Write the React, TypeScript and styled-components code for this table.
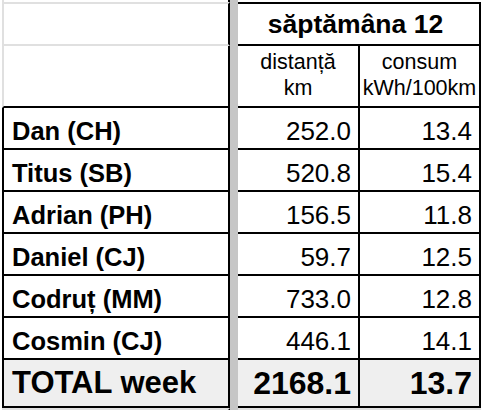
import React from "react";
import styled, { createGlobalStyle } from "styled-components";

const BLACK = "#000000";
const GRID = "#e0e0e0";
const BAND = "#c6c6c6";
const TOTAL_BG = "#efefef";

const Global = createGlobalStyle`
  html, body { margin: 0; padding: 0; background: #ffffff; }
  body { font-family: "Liberation Sans", Arial, sans-serif; color: #000; }
  * { box-sizing: border-box; }
`;

const Sheet = styled.div`
  display: grid;
  grid-template-columns: 228px 8px 122px 121px;
  grid-template-rows: 2px 44px 62px repeat(6, 42px) 48px 2px;
  padding-left: 2px;
  width: 482px;
  height: 410px;
  overflow: hidden;
`;

const FrozenBar = styled.div`
  grid-column: 2;
  grid-row: 1 / -1;
  background: ${BAND};
`;

const Spacer = styled.div`
  grid-column: 3 / span 2;
`;

type LabelKind = "top" | "head1" | "head2" | "foot";

const LabelFiller = styled.div<{ $kind: LabelKind }>`
  grid-column: 1;
  border-left: 2px solid ${GRID};
  border-right: 2px solid ${BLACK};
  border-top: ${(p) => (p.$kind === "head1" || p.$kind === "foot" ? `2px solid ${GRID}` : "none")};
  border-bottom: ${(p) =>
    p.$kind === "head1" ? `2px solid ${GRID}` : p.$kind === "head2" ? `2px solid ${BLACK}` : "none"};
`;

const WeekHeader = styled.div`
  grid-column: 3 / span 2;
  border-top: 2px solid ${BLACK};
  border-bottom: 2px solid ${BLACK};
  border-right: 2px solid ${BLACK};
  display: flex;
  align-items: center;
  justify-content: center;
  font-weight: 700;
  font-size: 26.5px;
  line-height: 30px;
  padding-right: 6px;
`;

const SubHead = styled.div`
  border-bottom: 2px solid ${BLACK};
  border-right: 2px solid ${BLACK};
  display: flex;
  flex-direction: column;
  align-items: center;
  justify-content: flex-start;
  padding-top: 3px;
  font-size: 21.5px;
  line-height: 26px;
  white-space: nowrap;
  overflow: visible;
`;

const NameCell = styled.div<{ $total?: boolean }>`
  grid-column: 1;
  border-left: 2px solid ${BLACK};
  border-right: 2px solid ${BLACK};
  border-bottom: 2px solid ${BLACK};
  background: ${(p) => (p.$total ? TOTAL_BG : "#ffffff")};
  display: flex;
  align-items: flex-end;
  padding-left: 8px;
  padding-bottom: ${(p) => (p.$total ? "5px" : "2px")};
  font-weight: 700;
  font-size: ${(p) => (p.$total ? "31px" : "25.5px")};
  line-height: ${(p) => (p.$total ? "36px" : "30px")};
  white-space: nowrap;
`;

const NumCell = styled.div<{ $total?: boolean }>`
  border-right: 2px solid ${BLACK};
  border-bottom: 2px solid ${BLACK};
  background: ${(p) => (p.$total ? TOTAL_BG : "#ffffff")};
  display: flex;
  align-items: flex-end;
  justify-content: flex-end;
  padding-right: 7px;
  padding-bottom: ${(p) => (p.$total ? "5px" : "2px")};
  font-weight: ${(p) => (p.$total ? 700 : 400)};
  font-size: ${(p) => (p.$total ? "32px" : "26px")};
  line-height: ${(p) => (p.$total ? "36px" : "30px")};
  white-space: nowrap;
`;

const FootCell = styled.div`
  border-top: 2px solid ${GRID};
`;

const rows = [
  { name: "Dan (CH)", dist: "252.0", cons: "13.4" },
  { name: "Titus (SB)", dist: "520.8", cons: "15.4" },
  { name: "Adrian (PH)", dist: "156.5", cons: "11.8" },
  { name: "Daniel (CJ)", dist: "59.7", cons: "12.5" },
  { name: "Codruț (MM)", dist: "733.0", cons: "12.8" },
  { name: "Cosmin (CJ)", dist: "446.1", cons: "14.1" },
];

export default function App() {
  return (
    <>
      <Global />
      <Sheet>
        <FrozenBar />
        <LabelFiller $kind="top" />
        <Spacer />

        <LabelFiller $kind="head1" />
        <WeekHeader>săptămâna 12</WeekHeader>

        <LabelFiller $kind="head2" />
        <SubHead>
          <span>distanță</span>
          <span>km</span>
        </SubHead>
        <SubHead>
          <span>consum</span>
          <span>kWh/100km</span>
        </SubHead>

        {rows.map((r) => (
          <React.Fragment key={r.name}>
            <NameCell>{r.name}</NameCell>
            <NumCell>{r.dist}</NumCell>
            <NumCell>{r.cons}</NumCell>
          </React.Fragment>
        ))}

        <NameCell $total>TOTAL week</NameCell>
        <NumCell $total>2168.1</NumCell>
        <NumCell $total>13.7</NumCell>

        <LabelFiller $kind="foot" />
        <FootCell />
        <FootCell />
      </Sheet>
    </>
  );
}
